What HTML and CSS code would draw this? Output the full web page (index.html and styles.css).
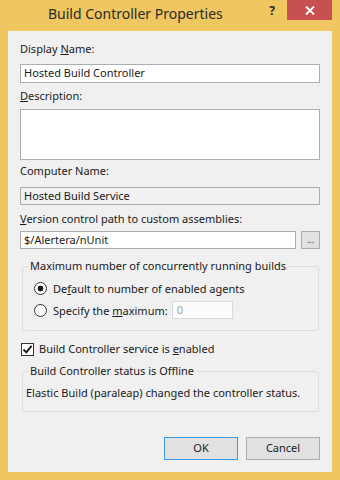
FILE: index.html
```html
<!DOCTYPE html>
<html>
<head>
<meta charset="utf-8">
<title>Build Controller Properties</title>
<link rel="stylesheet" href="styles.css">
</head>
<body>
<div class="window">
  <div class="titlebar">
    <div class="title">Build Controller Properties</div>
    <div class="help">?</div>
    <div class="close">
      <svg width="10" height="9" viewBox="0 0 10 9"><path d="M1 0.5 L9 8.5 M9 0.5 L1 8.5" stroke="#fff" stroke-width="1.8" fill="none"/></svg>
    </div>
  </div>
  <div class="client">
    <div class="lbl l-name">Display <u>N</u>ame:</div>
    <div class="textbox tb-name">Hosted Build Controller</div>
    <div class="lbl l-desc"><u>D</u>escription:</div>
    <div class="textbox tb-desc"></div>
    <div class="lbl l-comp">Computer Name:</div>
    <div class="textbox tb-comp">Hosted Build Service</div>
    <div class="lbl l-ver"><u>V</u>ersion control path to custom assemblies:</div>
    <div class="pathrow">
      <div class="textbox tb-path">$/Alertera/nUnit</div>
      <div class="browse">...</div>
    </div>
    <fieldset class="group g-max">
      <legend>Maximum number of concurrently running builds</legend>
      <div class="radio-row r1"><span class="radio checked"></span><span>De<u>f</u>ault to number of enabled agents</span></div>
      <div class="radio-row r2"><span class="radio"></span><span>Specify the <u>m</u>aximum:</span><span class="spin">0</span></div>
    </fieldset>
    <div class="check-row">
      <span class="check"><svg width="11" height="11" viewBox="0 0 11 11"><path d="M1.5 5.5 L4.3 8.4 L9.6 1.8" stroke="#1a1a1a" stroke-width="1.9" fill="none"/></svg></span>
      <span>Build Controller service is <u>e</u>nabled</span>
    </div>
    <fieldset class="group g-status">
      <legend>Build Controller status is Offline</legend>
      <div class="status-text">Elastic Build (paraleap) changed the controller status.</div>
    </fieldset>
    <div class="buttons">
      <div class="btn default">OK</div>
      <div class="btn">Cancel</div>
    </div>
  </div>
</div>
</body>
</html>
```
FILE: styles.css
```css
html, body {
  margin: 0;
  padding: 0;
}
body {
  font-family: "Noto Sans", "Open Sans", sans-serif;
  font-size: 11px;
  color: #1a1a1a;
}
.window {
  width: 340px;
  height: 480px;
  box-sizing: border-box;
  background: #efc660;
  display: flex;
  flex-direction: column;
}
.titlebar {
  height: 31px;
  display: flex;
  flex-shrink: 0;
}
.title {
  flex: 1;
  padding-left: 48px;
  padding-top: 4px;
  font-size: 14px;
  line-height: 20px;
  color: #2b2b2b;
}
.help {
  width: 30px;
  height: 20px;
  text-align: center;
  font-weight: bold;
  font-size: 12px;
  line-height: 22px;
  color: #2b2b2b;
}
.close {
  width: 45px;
  height: 20px;
  margin-right: 8px;
  background: #c75050;
  display: flex;
  align-items: center;
  justify-content: center;
}
.client {
  flex: 1;
  margin: 0 8px 8px 8px;
  background: #f0f0f0;
  padding: 10px 12px 12px 12px;
  display: flex;
  flex-direction: column;
}
.lbl {
  line-height: 16px;
  height: 16px;
}
.textbox {
  box-sizing: border-box;
  border: 1px solid #abadb3;
  background: #fff;
  padding: 0 3px;
  line-height: 16px;
  height: 19px;
}
.tb-name { margin-top: 7px; }
.l-desc { margin-top: 5px; }
.tb-desc { margin-top: 5px; height: 51px; }
.l-comp { margin-top: 3px; }
.tb-comp { margin-top: 8px; height: 18px; line-height: 15px; background: #f0f0f0; }
.l-ver { margin-top: 6px; }
.pathrow {
  margin-top: 4px;
  display: flex;
  gap: 5px;
  height: 18px;
}
.tb-path { width: 276px; height: 18px; line-height: 15px; }
.browse {
  box-sizing: border-box;
  width: 19px;
  height: 18px;
  border: 1px solid #adadad;
  background: #e1e1e1;
  font-size: 9px;
  line-height: 16px;
  text-align: center;
  color: #333;
}
.group {
  margin: 0 1px 0 2px;
  border: 1px solid #dcdcdc;
  border-radius: 3px;
  padding: 0 10px 10px 11px;
  min-width: 0;
}
.group legend {
  padding: 0 2px;
  line-height: 16px;
}
.g-max { margin-top: 9px; }
.g-max legend { margin-left: -6px; }
.radio-row {
  display: flex;
  align-items: center;
  height: 20px;
}
.r1 { margin-top: 4px; }
.r2 { margin-top: 2px; }
.radio {
  box-sizing: border-box;
  width: 13px;
  height: 13px;
  border: 1px solid #333;
  border-radius: 50%;
  background: #fff;
  margin-right: 6px;
  flex-shrink: 0;
}
.radio.checked {
  background: radial-gradient(circle, #1a1a1a 0 2.6px, #fff 3.2px);
}
.spin {
  box-sizing: border-box;
  width: 61px;
  height: 18px;
  margin-left: 4px;
  border: 1px solid #d9d9d9;
  background: #fcfcfc;
  color: #a0a0a0;
  padding-left: 4px;
  line-height: 15px;
}
.check-row {
  margin-top: 10px;
  height: 16px;
  line-height: 16px;
  display: flex;
  align-items: center;
}
.check {
  box-sizing: border-box;
  width: 13px;
  height: 13px;
  border: 1px solid #333;
  background: #fff;
  margin-left: 1px;
  margin-right: 5px;
  display: flex;
  align-items: center;
  justify-content: center;
}
.g-status {
  margin-top: 6px;
  padding: 6px 3px 10px 3px;
}
.g-status legend { margin-left: 2px; }
.status-text { line-height: 16px; }
.buttons {
  margin-top: 25px;
  display: flex;
  justify-content: flex-end;
  gap: 8px;
}
.btn {
  box-sizing: border-box;
  width: 74px;
  height: 23px;
  border: 1px solid #adadad;
  background: #e1e1e1;
  text-align: center;
  line-height: 20px;
}
.btn.default {
  border-color: #3c99e6;
}
```
